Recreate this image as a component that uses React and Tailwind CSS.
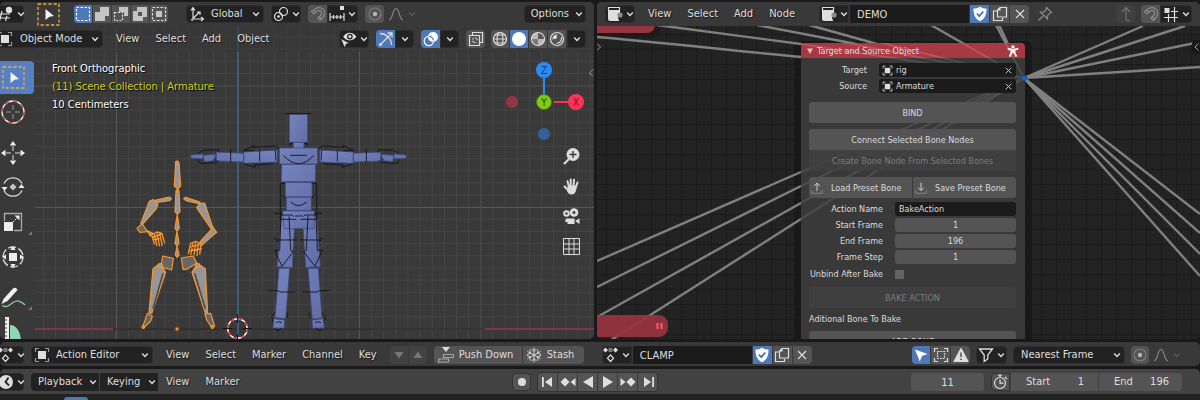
import React from "react";
import { twMerge as cx } from "tailwind-merge";

/* ---------- icons ---------- */

function Svg({ size = 16, children, className }) {
  return (
    <svg
      width={size}
      height={size}
      viewBox="0 0 16 16"
      fill="none"
      stroke="currentColor"
      strokeWidth="1.2"
      className={cx("shrink-0", className)}
      aria-hidden="true"
    >
      {children}
    </svg>
  );
}

const Chevron = ({ className }) => (
  <svg width="8" height="8" viewBox="0 0 8 8" fill="none" stroke="currentColor" strokeWidth="1.4" className={cx("shrink-0", className)} aria-hidden="true">
    <path d="M1.2 2.5 4 5.4 6.8 2.5" />
  </svg>
);

const icons = {
  editor3d: (
    <Svg>
      <path d="M0 8h5M0 12h12M4 5 1.5 15M9 10 7.5 15M3 8h9" />
      <circle cx="11" cy="4" r="3.2" fill="currentColor" stroke="none" />
    </Svg>
  ),
  node: (
    <Svg>
      <path d="M1.5 1.5h11v3h-11z" />
      <path d="M1 5h12v4a3 3 0 0 0-1 5v1H3a2 2 0 0 1-2-2z" fill="currentColor" stroke="none" />
      <circle cx="13" cy="9" r="2.6" fill="#8c8c8c" stroke="none" />
    </Svg>
  ),
  object: (
    <Svg>
      <rect x="4" y="4" width="8" height="8" fill="currentColor" stroke="none" />
      <path d="M1.5 5V1.5H5M11 1.5h3.5V5M14.5 11v3.5H11M5 14.5H1.5V11" stroke="#9a9a9a" />
    </Svg>
  ),
  action: (
    <Svg>
      <path d="m0 3 2.500-2.500L5 3 2.500 5.500zM10 3 12.500.5 15 3l-2.500 2.500z" fill="currentColor" stroke="none" />
      <path d="M5.500 1h4v4h-4z" fill="#777" stroke="none" />
      <path d="m7.500 8 3 3.200-3 3.300-3-3.300z" />
    </Svg>
  ),
  clock: (
    <Svg>
      <circle cx="8" cy="8" r="7" fill="currentColor" stroke="none" />
      <path d="M10.500 3.500 7.500 8l3.500 3.500" stroke="#222" strokeWidth="1.800" />
    </Svg>
  ),
  axes: (
    <Svg>
      <path d="M4 2.500V13h10M4 12.500 10 6.500M2 4.500l2-3 2 3M12 11l2.500 2-2.500 2M8 6h3v3M2 13.500l2 1" />
    </Svg>
  ),
  pivot: (
    <Svg>
      <circle cx="5.500" cy="10.500" r="4" />
      <circle cx="10.500" cy="5.500" r="4" />
      <circle cx="5.500" cy="10.500" r="1.300" fill="currentColor" stroke="none" />
    </Svg>
  ),
  magnet: (
    <Svg>
      <path d="M1.500 5.500 5.500 2.800C10 0 15.500 3 14.500 8c-.4 2.500-3 5.500-4.500 6.500L8 12c2-1.500 4-3.500 3.500-5.500S9 4 7.500 5L3.500 8zM4 4l1.600 2.600M11.500 13 9.500 10.500" />
    </Svg>
  ),
  snapInc: (
    <Svg>
      <path d="M1 7v8M15 7v8M1 11h14M4.500 9v4M8 9v4M11.500 9v4" />
      <rect x="11" y="0" width="4" height="4" fill="currentColor" stroke="none" />
    </Svg>
  ),
  snapGrid: (
    <Svg>
      <path d="M8 5.500h7M1 11.500h14M5.500 8v8M11.500 1v15" />
      <rect x="1.500" y="2" width="5" height="5" fill="currentColor" stroke="none" />
    </Svg>
  ),
  prop: (
    <Svg>
      <circle cx="8" cy="8" r="6" stroke="#7c7c7c" />
      <circle cx="8" cy="8" r="2.200" fill="#b5b5b5" stroke="none" />
    </Svg>
  ),
  falloff: (
    <Svg>
      <path d="M1 14C5 13.500 4.500 2.500 8 2.500S11 13.500 15 14" />
    </Svg>
  ),
  eye: (
    <Svg size={17}>
      <path d="M3 5.500C6 .5 12 .5 15.500 5.500 12 10 6 10 3 5.500z" fill="currentColor" stroke="none" />
      <circle cx="9.300" cy="5.200" r="2.100" fill="currentColor" stroke="#222" />
      <path d="M.5 7 9 11.500l-3.200.8L4.500 16z" fill="currentColor" stroke="#222" strokeWidth=".6" />
    </Svg>
  ),
  gizmo: (
    <Svg>
      <path d="M2 2.500c6 0 11.500 5 11.500 11.500M2 14 14 2M9.500 2H14v4.500" strokeWidth="1.300" />
      <circle cx="2.500" cy="13.500" r="1.500" fill="currentColor" stroke="none" />
    </Svg>
  ),
  overlay: (
    <Svg>
      <circle cx="10" cy="6" r="5" fill="#fff" stroke="none" />
      <circle cx="5.800" cy="10" r="4.600" stroke="#fff" />
      <path d="M10.300 9.500A4.600 4.600 0 0 0 5.800 5.400" stroke="#5680c2" />
    </Svg>
  ),
  xray: (
    <Svg>
      <path d="M4.500 4V1.500h10v10H12M1.500 4.500h10v10h-10z" />
      <path d="M5 7v4.500h4M7 7h2v3" strokeDasharray="1.500 1.200" />
    </Svg>
  ),
  wire: (
    <Svg>
      <circle cx="8" cy="8" r="6.500" />
      <ellipse cx="8" cy="8" rx="3" ry="6.500" />
      <path d="M1.500 8h13M3 4h10M3 12h10" strokeWidth=".9" />
    </Svg>
  ),
  solid: (
    <Svg>
      <circle cx="8" cy="8" r="7" fill="#fff" stroke="none" />
    </Svg>
  ),
  material: (
    <Svg>
      <circle cx="8" cy="8" r="6.500" fill="#b9b9b9" />
      <path d="M8 2a6 6 0 0 1 6 6H8z" fill="#5a5a5a" stroke="none" />
      <path d="M2 8h6v6a6 6 0 0 1-6-6z" fill="#7a7a7a" stroke="none" />
    </Svg>
  ),
  rendered: (
    <Svg>
      <circle cx="8" cy="8" r="6.500" />
      <path d="M4 8.500A4.200 4.200 0 0 1 8.500 4M12.500 6c.6 3-1 6-5 6.500" />
      <circle cx="6.200" cy="6.200" r="1.700" fill="currentColor" stroke="none" />
    </Svg>
  ),
  shield: (
    <Svg>
      <path d="M8 .8C5.800 2.200 4 2.600 1.500 2.600c0 6 1.500 10.500 6.500 12.600 5-2.100 6.500-6.600 6.500-12.600C12 2.600 10.200 2.200 8 .8z" fill="#fff" stroke="none" />
      <path d="m4.800 7.500 2.500 2.700L11.300 5.500" stroke="#4772b3" strokeWidth="1.800" />
    </Svg>
  ),
  copy: (
    <Svg>
      <path d="M8 1.500h6.500V11h-9V4zM8 1.500V4H5.500M5 5H1.500v9.500h9V12" />
    </Svg>
  ),
  close: (
    <Svg>
      <path d="m4 4 8 8M12 4l-8 8" />
    </Svg>
  ),
  pin: (
    <Svg>
      <path d="M9.500 1.500 14.500 6.500l-1.500.5-2.500 2.500V13L7 9.500 3.500 6H7L9.200 3.500zM6 10l-4.500 4.500" />
    </Svg>
  ),
  up: (
    <Svg>
      <path d="M8 14.500V2M4 6l4-4.500L12 6M8 14.500h4" />
    </Svg>
  ),
  pushDown: (
    <Svg>
      <path d="M4 0h8L8 5z" fill="currentColor" stroke="none" />
      <path d="M5.500 7.500h10v3h-10zM.6 12h10v3H.6z" stroke="#a5a5a5" />
    </Svg>
  ),
  snow: (
    <Svg>
      <path d="M8 .5v15M1.500 4.500l13 7M14.500 4.500l-13 7M5.500 2 8 4.500 10.500 2M5.500 14 8 11.500l2.500 2.500M1 7.500l3.500-1.200L4 2.500M15 7.500l-3.500-1.200.5-3.800M1 8.500l3.500 1.200L4 13.500M15 8.500l-3.500 1.200.5 3.800" strokeWidth=".9" />
    </Svg>
  ),
  arrow: (
    <Svg>
      <path d="M2 2.500 14.500 7 9 9l-2.200 5.500z" fill="#fff" stroke="none" />
    </Svg>
  ),
  onlySel: (
    <Svg>
      <path d="M1.500 5V1.500H5M11 1.500h3.500V5M14.500 11v3.500H11M5 14.500H1.500V11" />
      <path d="M4.500 4.500h7v7h-7z" strokeDasharray="1.800 1" />
    </Svg>
  ),
  warn: (
    <Svg>
      <path d="M8 1.500 15 14.500H1z" fill="currentColor" strokeLinejoin="round" />
      <path d="M8 5.500v4.500M8 11.500v1.500" stroke="#555" strokeWidth="1.600" />
    </Svg>
  ),
  funnel: (
    <Svg>
      <path d="M1.500 2h13L9.800 8v4L6.200 14.500V8z" strokeWidth="1.300" />
    </Svg>
  ),
  stopwatch: (
    <Svg>
      <circle cx="8" cy="9" r="5.500" />
      <path d="M6 1h4M8 1v2M8 5.500v3.700h3.500M13 3l2 2" />
    </Svg>
  ),
  load: (
    <Svg size={12}>
      <path d="M8 12V2M4 5.500 8 1.500l4 4" />
      <path d="M1 11v4h14v-4" stroke="#8b8b8b" />
    </Svg>
  ),
  save: (
    <Svg size={12}>
      <path d="M8 1v10M4 7.500l4 4 4-4" />
      <path d="M1 11v4h14v-4" stroke="#8b8b8b" />
    </Svg>
  ),
  figure: (
    <Svg size={12}>
      <circle cx="8" cy="2.500" r="2.300" fill="currentColor" stroke="none" />
      <path d="M1 5 6 6v4L3.500 15.500M15 5 10 6v4l2.500 5.500M8 6v5" strokeWidth="2.400" />
    </Svg>
  ),
};

const SelectMode = ({ kind }) => (
  <Svg>
    {kind === 0 && <rect x="1.500" y="1.500" width="13" height="13" stroke="#fff" strokeDasharray="2.500 1.500" />}
    {kind === 1 && <path d="M6 1h9v9h-4v5H1V6h5z" fill="#c4c4c4" stroke="none" />}
    {kind === 2 && (
      <>
        <path d="M6 1h9v9h-4V6H6z" fill="#c4c4c4" stroke="none" />
        <path d="M1.500 6.500h8v8h-8z" strokeDasharray="2 1.400" />
      </>
    )}
    {kind === 3 && <path d="M5 1h10v10h-4v4H1V5h4zM6 6v4h4V6z" fill="#c4c4c4" fillRule="evenodd" stroke="none" />}
    {kind === 4 && (
      <>
        <rect x="1.500" y="1.500" width="13" height="13" strokeDasharray="2.500 1.500" />
        <rect x="5" y="5" width="6" height="6" fill="#c4c4c4" stroke="none" />
      </>
    )}
  </Svg>
);

const TweakIcon = () => (
  <svg width="23" height="23" viewBox="0 0 23 23" fill="none" aria-hidden="true" className="shrink-0">
    <rect x="1" y="1" width="21" height="21" stroke="#f7a93b" strokeWidth="1.300" strokeDasharray="3.200 2" />
    <path d="M8.500 6 17 13l-4.500.8L8.500 17z" fill="#f2f2f2" />
  </svg>
);

/* ---------- controls ---------- */

const DARK = "bg-[#222222] border border-[#2f2f2f]";
const GREY = "bg-[#545454]";

const IconButton = ({ icon, label, active, className }) => (
  <button
    type="button"
    aria-label={label}
    className={cx("flex h-[18px] w-[19px] shrink-0 items-center justify-center", active ? "bg-[#4f78b8]" : GREY, className)}
  >
    {icon}
  </button>
);

const MenuIcon = ({ icon, label, className }) => (
  <button
    type="button"
    aria-label={label}
    className={cx("flex h-[18px] shrink-0 items-center justify-center gap-[3px] rounded-[4px]", DARK, className)}
  >
    {icon}
    <Chevron />
  </button>
);

const Menus = ({ items, className }) => (
  <nav className={cx("flex shrink-0 items-center", className)}>
    {items.map((t) => (
      <button key={t} type="button" className="h-[18px] px-2 text-shadow-[1px_1px_1px_#1a1a1a]">
        {t}
      </button>
    ))}
  </nav>
);

const Drop = ({ label, value, icon, className, pad }) => (
  <div className={cx("relative flex h-[18px] shrink-0 items-center", className)}>
    {icon && <span className="pointer-events-none absolute left-[3px]">{icon}</span>}
    <select aria-label={label} className={cx("h-full w-full appearance-none rounded-[4px] outline-none", DARK, pad)}>
      <option>{value}</option>
    </select>
    <Chevron className="pointer-events-none absolute right-1" />
  </div>
);

const DataBlock = ({ icon, name, label, className }) => (
  <div className={cx("flex shrink-0 items-center gap-px", className)}>
    <MenuIcon icon={icon} label={"Browse " + label} className="w-[30px] rounded-r-none" />
    <input aria-label={label} defaultValue={name} className="h-[18px] w-[119px] bg-[#1b1b1b] px-[7px] outline-none" />
    <IconButton icon={icons.shield} label="Fake user" active />
    <IconButton icon={icons.copy} label="New copy" />
    <IconButton icon={icons.close} label="Unlink" className="rounded-r-[4px]" />
  </div>
);

const Falloff = () => (
  <button type="button" aria-label="Falloff" className="ml-1 flex h-[18px] items-center gap-1 text-[#858585]">
    {icons.falloff}
    <Chevron className="text-[#5a5a5a]" />
  </button>
);

/* ---------- 3D viewport drawing ---------- */

function Armature() {
  const g = "#969696";
  const d = "#666";
  return (
    <g transform="translate(0 120) scale(.33333)" fill={g} stroke="#f7952b" strokeWidth="3.600" strokeLinejoin="round">
      <path d="M531 124l6 6 5 68-9 9-10-9 4-68z" />
      <path d="M533 207l4 6 3 62-8 8-7-8 3-62zM532 283l6 42-7 8-6-8zM531 333l6 37-6 8-6-8zM531 378l6 27-6 7-5-7z" />
      <path d="M514 237l-6-6-40 9-5 6 7 1 38-5zM551 236l5-4 44 14-2 5-40-9z" />
      <path d="M448 244l12-5 14 14-6 14-41 47-5-3z" />
      <path d="M590 263l10-13 14-1 24 73-5 4z" />
      <path d="M427 312l-16 13 9 12 22-2z" fill={d} />
      <path d="M441 332l18 8-8 8zM638 320l12 17-18 15-27 24-5-10 34-38z" />
      <path d="M488 408l32 7-5 35-32-10z" fill={d} />
      <path d="M544 414l36-6 10 22-30 18h-11z" fill={d} />
      <path d="M459 446l21-16 17 27-42 123-8-2zM576 457l16-27 24 16 7 134-6 2z" />
      <path d="M489 460l-30 106M584 460l32 106" stroke="#4d4d4d" strokeWidth="5" />
      <path d="M442 580l15 8-5 15-20 20-4-3zM615 582l17-2 12 38-8 5-16-23z" fill={d} />
      <circle cx="481" cy="437" r="6" />
      <circle cx="593" cy="436" r="6" />
      <circle cx="531" cy="128" r="5" />
      <circle cx="430" cy="621" r="4" />
      <circle cx="637" cy="621" r="4" />
      <circle cx="531" cy="627" r="6" fill="#f7952b" stroke="#7a4a15" />
      <path
        d="M455 345l16-9 15 4 8 30M455 346l9 28M463 342l8 36M471 340l8 39M479 340l8 38M456 352l30-10M458 360l33-8M603 372l-16-8-15 6-7 32M603 374l-4 30M595 370l-4 38M587 368l-5 38M579 370l-7 36M568 382l34-8M568 392l38-6"
        fill="none"
        strokeWidth="4"
      />
    </g>
  );
}

function ArmSide() {
  return (
    <>
      <path d="M239 150l101 6v34l-101-4zM340 160l82-4v27l-82 3zM422 163l40 3-4 19-26-3zM462 162l37 3-1 10-36 1z" fill="url(#skin)" stroke="#3c4679" strokeWidth="2" />
      <path d="M234 146l12-8 65 4-3-6 32 16-30 0M250 191l58 4-2 7 32-10M245 150l-2 32M292 150v34M379 148v38M414 158l2-9 45 2 14 8M416 182l10 6 44 2 8-12" />
      <path d="M193 130h8v8M215 250h15v108h-48M215 296l8-12M225 340h24M190 350l5-5h33l4 106 15 0-22 48-34-44 8-4 5-102M240 416h10M180 420h62l-4 6M186 576h44l8-4h28M212 655l-5-10 4-8M246 638l10 12-4 14M225 668q10-6 18 0M226 684l10 8 10-4" />
    </>
  );
}

function Rig() {
  return (
    <g transform="translate(240 100) scale(.33333)" fill="none" stroke="#101114" strokeWidth="2.600" strokeLinejoin="round">
      <g fill="url(#skin)" stroke="#3c4679" strokeWidth="2">
        <path d="M160 127h32v22h-32z" />
        <path d="M148 43h55v84h-55z" />
        <path d="M125 193h102l-1 52H124zM136 247h80v45h-80zM139 290h75v42h-75z" />
        <path d="M125 345l40 5-8 153-46-3zM230 345l-43 5 10 153 44-3z" />
        <path d="M117 505h32l-12 151-32-3zM204 505h31l11 150-29 2z" />
        <path d="M102 656l32 4-1 25-34-1zM250 656l-34 4 2 25 35-1z" />
        <path d="M128 333h95v53h-91z" />
        <path d="M118 144h115v48H118z" />
      </g>
      <path d="M135 41h80M130 166q46 50 92 0M150 166h50M152 306q24 22 48 0M165 348h22" />
      <ArmSide />
      <g transform="translate(351 0) scale(-1 1)">
        <ArmSide />
      </g>
    </g>
  );
}

const ViewportDrawing = () => (
  <svg className="absolute inset-0 h-full w-full" aria-hidden="true">
    <defs>
      <linearGradient id="skin" x1="0" y1="0" x2="1" y2="1">
        <stop offset="0" stopColor="#7684bd" />
        <stop offset="1" stopColor="#606da6" />
      </linearGradient>
      <pattern id="fine" width="12.150" height="12.150" patternUnits="userSpaceOnUse" x="6.450" y="12.300">
        <path d="M0 .5h12.150M.5 0v12.150" stroke="#444444" />
      </pattern>
    </defs>
    <g transform="translate(0 -2)">
      <rect width="100%" height="110%" fill="#393939" />
      <rect width="100%" height="110%" fill="url(#fine)" />
      <path d="M0 207.500h700M116.500 26v400M359.500 26v400" stroke="#565656" />
      <path d="M0 86h700M481 26v400" stroke="#4a4a4a" />
      <path d="M0 329h700" stroke="#262122" />
      <path d="M375 329.500h110" stroke="#56292c" />
      <path d="M0 329h113M485 329h220" stroke="#943c45" strokeWidth="1.600" />
      <path d="M238 26v400" stroke="#3f6293" strokeWidth="1.600" />
      <rect width="35" height="420" fill="#393939" />
      <Armature />
      <Rig />
      <circle cx="237.500" cy="328.500" r="9.800" fill="none" stroke="#fff" strokeWidth="1.500" />
      <circle cx="237.500" cy="328.500" r="9.800" fill="none" stroke="#e02020" strokeWidth="1.500" strokeDasharray="3.850 3.850" />
      <path d="M237.500 314v9M237.500 334v6M223 328.500h9M243 328.500h9" stroke="#15171b" />
    </g>
  </svg>
);

const tools = [
  {
    name: "Cursor",
    gap: "mt-[5px]",
    art: (
      <>
        <circle cx="13" cy="13" r="11" stroke="#eee" strokeWidth="1.300" />
        <circle cx="13" cy="13" r="11" stroke="#c0444c" strokeWidth="1.300" strokeDasharray="4.300 4.300" />
        <path d="M13 6v5M13 15v5M6 13h5M15 13h5" stroke="#9a9a9a" />
      </>
    ),
  },
  {
    name: "Move",
    gap: "mt-[15px]",
    art: (
      <>
        <path d="M13 6v5M13 15v5M6 13h5M15 13h5" stroke="#ddd" />
        <path d="m13 1 3.200 4.500H9.800zM13 25l3.200-4.500H9.800zM1 13l4.500-3.200v6.400zM25 13l-4.500-3.200v6.400z" fill="#eee" />
      </>
    ),
  },
  {
    name: "Rotate",
    gap: "mt-2",
    art: (
      <>
        <path d="M4 9.500a10 10 0 0 1 18 0M22 16.500a10 10 0 0 1-18 0" stroke="#ddd" strokeWidth="1.300" />
        <path d="M1.500 13h6L4.500 17zM18.500 14h6l-3-4z" fill="#eee" />
        <path d="m13 9.500 3.500 3.500-3.500 3.500L9.500 13z" fill="#c4c4c4" />
      </>
    ),
  },
  {
    name: "Scale",
    gap: "mt-[9px]",
    corner: true,
    art: (
      <>
        <path d="M4.500 12V4.500h17v17H14" stroke="#aaa" strokeWidth="1.300" />
        <path d="M4 13h9v9H4z" fill="#eee" />
        <path d="m13 13 4-4" stroke="#eee" strokeDasharray="2 1" />
        <path d="M19.500 6.500v5l-5-5z" fill="#eee" />
      </>
    ),
  },
  {
    name: "Transform",
    gap: "mt-[9px]",
    art: (
      <>
        <circle cx="13" cy="13" r="10" stroke="#ddd" strokeWidth="1.300" strokeDasharray="8 2.500" />
        <path d="M9 9h8v8H9z" fill="#eee" />
        <path d="m13 2 2.600 4h-5.200zM13 24l2.600-4h-5.200zM2 13l4-2.600v5.200zM24 13l-4-2.600v5.200z" fill="#eee" />
      </>
    ),
  },
  {
    name: "Annotate",
    gap: "mt-[14px]",
    corner: true,
    art: (
      <>
        <path d="M1.500 20 3.500 15 13 4.500q3-2 4.500 1.500L7.500 17z" fill="#eee" />
        <path d="M2 21.500c5 3 8-1 11-3s6-3 12 2.500" stroke="#7fc9a2" strokeWidth="1.400" />
      </>
    ),
  },
  {
    name: "Measure",
    gap: "mt-[6px]",
    art: (
      <>
        <path d="M10 26V9c7 0 11 8 11 17z" fill="#8fd6b1" />
        <path d="M5 1h4v25H5z" fill="#eee" />
        <path d="M5 4h2M5 8h2M5 12h2M5 16h2M5 20h2" stroke="#444" />
      </>
    ),
  },
];

const Toolbar = () => (
  <div className="mt-px flex w-[34px] flex-col items-start">
    <button type="button" aria-label="Select Box" className="flex h-[33px] w-full shrink-0 items-center rounded-r-[4px] bg-[#5680c2] pl-[2px]">
      <TweakIcon />
    </button>
    {tools.map((t) => (
      <button key={t.name} type="button" aria-label={t.name} className={cx("h-[26px] w-[34px] shrink-0", t.gap)}>
        <svg width="34" height="26" viewBox="0 0 34 26" fill="none" aria-hidden="true">
          {t.art}
          {t.corner && <path d="M32 22v4h-4z" fill="#777" />}
        </svg>
      </button>
    ))}
  </div>
);

const NavGizmo = () => (
  <svg width="82" height="82" viewBox="0 0 82 82" role="img" aria-label="View axes" className="font-['DejaVu_Sans_Condensed','DejaVu_Sans',sans-serif] text-[10px]">
    <path d="M40 14v22" stroke="#2b8bf5" strokeWidth="2" />
    <path d="M50 41h16" stroke="#ff3352" strokeWidth="2" />
    <circle cx="40" cy="9" r="8" fill="#2b8bf5" />
    <circle cx="72" cy="41" r="8" fill="#ff3352" />
    <circle cx="40" cy="41" r="7.500" fill="#80cc0c" stroke="#4f7a14" />
    <circle cx="8" cy="41" r="6" fill="#95353f" />
    <circle cx="40" cy="73" r="6" fill="#375f98" />
    <g textAnchor="middle">
      <text x="40" y="13" fill="#0d3a70">Z</text>
      <text x="40" y="45" fill="#1f3a05">Y</text>
      <text x="72" y="45" fill="#7a1425">X</text>
    </g>
  </svg>
);

const navButtons = [
  [
    "Zoom",
    <g key="z">
      <circle cx="10" cy="6.500" r="6.500" fill="#dcdcdc" />
      <path d="m6 11-5 5" stroke="#dcdcdc" strokeWidth="2.200" />
      <path d="M6.500 6.500h7M10 3v7" stroke="#333" strokeWidth="1.300" />
    </g>,
  ],
  [
    "Pan",
    <g key="p">
      <path d="M4.500 3.200 6 9M7.700 1.500V8M11 1.700 10.500 8M14.500 4.500 12.500 10M1.500 8.500l4 4" stroke="#dcdcdc" strokeWidth="2" strokeLinecap="round" />
      <path d="M4.800 7.500h9L13 13q-1.500 3.500-4.500 3.500T4 13z" fill="#dcdcdc" />
    </g>,
  ],
  [
    "Camera",
    <g key="c" fill="#dcdcdc">
      <circle cx="3.500" cy="5.500" r="3.300" />
      <circle cx="11" cy="4.500" r="4.300" />
      <path d="M3 10.500h8.500v5.500H4.500v-2H2zM12 13l4.500-2.500V16z" />
      <circle cx="3.500" cy="5.500" r="1.200" fill="#444" />
      <circle cx="11" cy="4.500" r="1.500" fill="#444" />
    </g>,
  ],
  ["Orthographic grid", <path key="o" d="M.5 .5h16v16h-16zM6 1v15M11 1v15M1 6h15M1 11h15" stroke="#dcdcdc" />],
];

const ViewportEditor = () => (
  <section className="relative flex w-[49.5%] shrink-0 flex-col overflow-hidden rounded-[5px] bg-[#393939]">
    <ViewportDrawing />
    <header className="relative flex h-6 shrink-0 items-center bg-[#393939]">
      <MenuIcon icon={icons.editor3d} label="Editor type" className="w-6 rounded-l-none border-l-0" />
      <button type="button" aria-label="Tweak tool" className="ml-[13px]">
        <TweakIcon />
      </button>
      <div className="ml-[14px] flex gap-px overflow-hidden rounded-[4px]">
        {[0, 1, 2, 3, 4].map((k) => (
          <IconButton key={k} icon={<SelectMode kind={k} />} label={"Select mode " + (k + 1)} active={k === 0} className="w-[18px]" />
        ))}
      </div>
      <Drop label="Transform orientation" value="Global" icon={icons.axes} className="ml-[18px] w-[78px]" pad="pl-6" />
      <MenuIcon icon={icons.pivot} label="Pivot point" className="ml-[7px] w-[30px]" />
      <IconButton icon={<span className="text-[#8c8c8c]">{icons.magnet}</span>} label="Snap" className="ml-[7px] rounded-l-[4px]" />
      <MenuIcon icon={icons.snapInc} label="Snap to" className="w-[31px] rounded-l-none" />
      <IconButton icon={icons.prop} label="Proportional editing" className="ml-[7px] rounded-[4px]" />
      <Falloff />
      <button type="button" className={cx("mr-2 ml-auto flex h-[18px] items-center gap-[6px] rounded-[4px] pr-[2px] pl-[6px]", DARK)}>
        Options
        <Chevron />
      </button>
    </header>
    <div className="relative flex h-[26px] shrink-0 items-center bg-[#393939]/60">
      <Drop label="Mode" value="Object Mode" icon={<span className="-ml-[6px] block">{icons.object}</span>} className="w-[103px]" pad="pl-[19px] rounded-l-none" />
      <Menus items={["View", "Select", "Add", "Object"]} className="ml-[5px]" />
      <MenuIcon icon={icons.eye} label="Object visibility" className="ml-auto w-[30px]" />
      <IconButton icon={icons.gizmo} label="Gizmos" active className="ml-[7px] rounded-l-[4px]" />
      <MenuIcon label="Gizmo options" className="w-[19px] rounded-l-none" />
      <IconButton icon={icons.overlay} label="Overlays" active className="ml-[7px] rounded-l-[4px]" />
      <MenuIcon label="Overlay options" className="w-[19px] rounded-l-none" />
      <IconButton icon={icons.xray} label="Toggle X-ray" className="ml-[7px] rounded-[4px]" />
      <div className="mr-2 ml-[6px] flex gap-px">
        <IconButton icon={icons.wire} label="Wireframe" className="w-[18px] rounded-l-[4px]" />
        <IconButton icon={icons.solid} label="Solid" active className="w-[18px]" />
        <IconButton icon={icons.material} label="Material preview" className="w-[18px]" />
        <IconButton icon={icons.rendered} label="Rendered" className="w-[18px]" />
        <MenuIcon label="Shading options" className="w-[19px] rounded-l-none" />
      </div>
    </div>
    <div className="relative flex min-h-0 flex-1 pt-2">
      <Toolbar />
      <div className="ml-[18px] text-[11px] leading-[18px] text-white text-shadow-[1px_1px_1px_#000]">
        <p>Front Orthographic</p>
        <p className="text-[#cfcf1c]">(11) Scene Collection | Armature</p>
        <p>10 Centimeters</p>
      </div>
      <div className="mt-px mr-2 ml-auto flex flex-col items-end">
        <NavGizmo />
        <div className="mt-[5px] mr-[6px] flex flex-col gap-[13px]">
          {navButtons.map(([name, art]) => (
            <button key={name} type="button" aria-label={name}>
              <svg width="17" height="17" viewBox="0 0 17 17" fill="none" aria-hidden="true" className="block">
                {art}
              </svg>
            </button>
          ))}
        </div>
      </div>
    </div>
    <button type="button" aria-label="Show sidebar" className="absolute top-[66px] right-0 text-[#a0a0a0]">
      <svg width="6" height="10" viewBox="0 0 6 10" fill="none" stroke="currentColor" aria-hidden="true">
        <path d="M5 1.500 1.500 5 5 8.500" />
      </svg>
    </button>
  </section>
);

/* ---------- node editor ---------- */

const wires = [
  "M0 37 C60 42 130 50 204 57",
  "M60 25 L204 44",
  "M160 25 L296 51",
  "M212 25 L330 58",
  "M334 25 L402 64",
  "M399 25 L427 78",
  "M402 25 L427 78",
  "M427 78 L546 26",
  "M427 78 L588 26",
  "M427 78 L603 42",
  "M427 78 L603 67",
  "M427 78 L603 214",
  "M427 78 L603 233",
  "M427 78 L603 254",
  "M427 78 L603 276",
  "M0 261 L204 172",
  "M0 287 L204 186",
  "M0 317 L204 203",
  "M14 340 L204 219",
];

const ghostWires = [
  "M204 44 L427 78",
  "M160 25 L427 78",
  "M212 25 L427 78",
  "M334 25 L402 64",
  "M399 25 L427 78",
  "M204 172 L427 78",
  "M204 186 L427 78",
  "M204 203 L427 78",
  "M204 219 L427 78",
];

const NodeCanvas = () => (
  <svg className="absolute inset-0 h-full w-full" aria-hidden="true">
    <defs>
      <pattern id="cells" width="15" height="15" patternUnits="userSpaceOnUse" x="9" y="4">
        <path d="M0 .5h15M.5 0v15" stroke="#1b1b1b" />
      </pattern>
    </defs>
    <g transform="translate(0 -2)">
      <rect width="100%" height="110%" fill="#232323" />
      <rect width="100%" height="110%" fill="url(#cells)" />
      <rect x="-20" y="0" width="83" height="38" rx="9" fill="#1a1a1a" opacity=".7" />
      <rect x="-20" y="0" width="78" height="33" rx="8" fill="#98343f" />
      <rect x="197" y="41" width="238" height="310" rx="6" fill="#171717" opacity=".8" />
      <g stroke="#808080" strokeWidth="2.400" fill="none">
        {wires.map((d) => (
          <path key={d} d={d} />
        ))}
      </g>
      <rect x="-20" y="315" width="91" height="22" rx="9" fill="#98343f" opacity=".93" />
      <path d="M60.500 323v6M64.500 323v6" stroke="#ff5f6c" strokeWidth="2" />
    </g>
  </svg>
);

const Ghosts = ({ top, tone }) => (
  <svg className="absolute inset-0 h-full w-full overflow-hidden" aria-hidden="true">
    <g transform={`translate(-204 ${-top})`} stroke={tone} strokeWidth="2" fill="none">
      {ghostWires.map((d) => (
        <path key={d} d={d} />
      ))}
    </g>
  </svg>
);

const PanelButton = ({ children, className, disabled }) => (
  <button
    type="button"
    disabled={disabled}
    className={cx(
      "flex h-[21px] items-center justify-center whitespace-nowrap",
      disabled ? "bg-[#414141]/80 text-[#7c7c7c]" : "bg-[#545454]",
      className
    )}
  >
    {children}
  </button>
);

const PointerRow = ({ id, label, value }) => (
  <div className="flex h-4 items-center">
    <label htmlFor={id} className="w-[58px] text-right">
      {label}
    </label>
    <div className="ml-3 flex h-[14px] min-w-0 flex-1 items-center rounded-[3px] bg-[#1b1b1b] px-[3px]">
      <Svg size={11}>
        <rect x="4" y="4" width="8" height="8" fill="currentColor" stroke="none" />
        <path d="M1.500 5V1.500H5M11 1.500h3.500V5M14.500 11v3.500H11M5 14.500H1.500V11" />
      </Svg>
      <input id={id} defaultValue={value} className="ml-[3px] h-full min-w-0 flex-1 bg-transparent outline-none" />
      <button type="button" aria-label={"Clear " + label}>
        <Svg size={9}>
          <path d="m3 3 10 10M13 3 3 13" strokeWidth="1.600" />
        </Svg>
      </button>
    </div>
  </div>
);

const FieldRow = ({ id, label, value, text }) => (
  <div className="flex h-4 items-center">
    <label htmlFor={id} className="w-[74px] text-right whitespace-nowrap">
      {label}
    </label>
    <input
      id={id}
      defaultValue={value}
      className={cx("ml-3 h-[14px] min-w-0 flex-1 rounded-[3px] outline-none", text ? "bg-[#1b1b1b] px-1" : "bg-[#545454] text-center")}
    />
  </div>
);

const BoneNode = () => (
  <article className="absolute top-[41px] left-[204px] w-[224px] text-[9px] leading-[12px] text-[#dcdcdc]">
    <header className="relative flex h-[15px] items-center rounded-t-[4px] bg-[#a83843] px-[6px]">
      <Ghosts top={43} tone="#b8535d" />
      <svg width="6" height="6" viewBox="0 0 6 6" className="relative" aria-hidden="true">
        <path d="M0 .5h6L3 6z" fill="#e3b9bc" />
      </svg>
      <h2 className="relative ml-1">Target and Source Object</h2>
      <span className="relative ml-auto text-white">{icons.figure}</span>
    </header>
    <div className="relative flex flex-col bg-[#393939] pt-1 pr-[9px] pb-3 pl-2">
      <Ghosts top={58} tone="#4d4d4d" />
      <div className="relative flex flex-col">
        <PointerRow id="target" label="Target" value="rig" />
        <PointerRow id="source" label="Source" value="Armature" />
        <PanelButton className="mt-2 rounded-[3px]">BIND</PanelButton>
        <PanelButton className="mt-[6px] rounded-t-[3px]">Connect Selected Bone Nodes</PanelButton>
        <PanelButton disabled className="rounded-b-[3px]">
          Create Bone Node From Selected Bones
        </PanelButton>
        <div className="mt-[6px] grid grid-cols-2 gap-px">
          <PanelButton className="justify-start gap-2 rounded-l-[3px] pl-[2px]">
            {icons.load}Load Preset Bone
          </PanelButton>
          <PanelButton className="justify-start gap-2 rounded-r-[3px] pl-[2px]">
            {icons.save}Save Preset Bone
          </PanelButton>
        </div>
        <div className="mt-[3px] flex flex-col">
          <FieldRow id="action-name" label="Action Name" value="BakeAction" text />
          <FieldRow id="start-frame" label="Start Frame" value="1" />
          <FieldRow id="end-frame" label="End Frame" value="196" />
          <FieldRow id="frame-step" label="Frame Step" value="1" />
        </div>
        <div className="flex h-[18px] items-center">
          <label htmlFor="unbind" className="w-[74px] text-right whitespace-nowrap">
            Unbind After Bake
          </label>
          <input id="unbind" type="checkbox" className="ml-3 h-[9px] w-[9px] appearance-none rounded-[1px] bg-[#636363]" />
        </div>
        <PanelButton disabled className="mt-1 rounded-[3px]">
          BAKE ACTION
        </PanelButton>
        <p className="mt-[5px]">Aditional Bone To Bake</p>
        <PanelButton className="mt-[6px] rounded-[3px]">ADD BONE</PanelButton>
      </div>
    </div>
    <svg width="8" height="8" viewBox="0 0 8 8" className="absolute top-[31px] -right-[3px]" aria-hidden="true">
      <path d="m4 .5 3.500 3.500L4 7.500.5 4z" fill="#1c63cf" stroke="#12305f" strokeWidth=".8" />
    </svg>
  </article>
);

const NodeEditor = () => (
  <section className="relative flex min-w-0 flex-1 flex-col overflow-hidden rounded-[5px] bg-[#232323]">
    <NodeCanvas />
    <BoneNode />
    <header className="relative flex h-6 shrink-0 items-center bg-[#393939]">
      <MenuIcon icon={icons.node} label="Editor type" className="ml-2 w-[30px]" />
      <Menus items={["View", "Select", "Add", "Node"]} className="ml-[5px]" />
      <DataBlock icon={icons.node} name="DEMO" label="Node tree" className="ml-4" />
      <button type="button" aria-label="Pin" className="ml-2 text-[#8c8c8c]">
        {icons.pin}
      </button>
      <IconButton icon={<span className="text-[#707070]">{icons.up}</span>} label="Parent tree" className="mr-[6px] ml-auto rounded-[4px] bg-[#404040]" />
      <IconButton icon={<span className="text-[#8c8c8c]">{icons.magnet}</span>} label="Snap" className="rounded-l-[4px]" />
      <MenuIcon icon={icons.snapGrid} label="Snap to" className="mr-2 w-8 rounded-l-none" />
    </header>
    <button type="button" aria-label="Show toolbar" className="absolute top-[39px] left-0 text-[#a0a0a0]">
      <svg width="6" height="12" viewBox="0 0 6 12" fill="none" stroke="currentColor" aria-hidden="true">
        <path d="M0 2.500 3.500 6 0 9.500" />
      </svg>
    </button>
    <button type="button" aria-label="Show node sidebar" className="absolute top-[38px] right-0 rounded-l-[4px] bg-[#191919] text-[#a0a0a0]">
      <svg width="8" height="14" viewBox="0 0 8 14" fill="none" stroke="currentColor" aria-hidden="true">
        <path d="M6.500 3.500 3 7l3.500 3.500" />
      </svg>
    </button>
  </section>
);

/* ---------- bottom bars ---------- */

const ActionBar = () => (
  <section className="flex h-6 shrink-0 items-center rounded-[5px] bg-[#393939] pt-[2px]">
    <MenuIcon icon={icons.action} label="Editor type" className="w-6 rounded-l-none border-l-0" />
    <Drop label="Editing context" value="Action Editor" icon={icons.object} className="ml-[7px] w-[122px]" pad="pl-6" />
    <Menus items={["View", "Select", "Marker", "Channel", "Key"]} className="ml-[5px]" />
    <div className="ml-[5px] flex gap-px text-[#777]">
      {["M3.500 5h9L8 11.500z", "M3.500 11h9L8 4.500z"].map((d, i) => (
        <IconButton
          key={d}
          label={i ? "Layer up" : "Layer down"}
          className={cx("w-[18px] bg-[#424242]", i ? "rounded-r-[4px]" : "rounded-l-[4px]")}
          icon={
            <Svg>
              <path d={d} fill="currentColor" stroke="none" />
            </Svg>
          }
        />
      ))}
    </div>
    <div className="ml-[7px] flex gap-px">
      <button type="button" className={cx("flex h-[18px] w-[88px] items-center gap-[5px] rounded-l-[4px] pl-1 whitespace-nowrap", GREY)}>
        {icons.pushDown}Push Down
      </button>
      <button type="button" className={cx("flex h-[18px] w-[61px] items-center gap-[5px] rounded-r-[4px] pl-[3px]", GREY)}>
        {icons.snow}Stash
      </button>
    </div>
    <DataBlock icon={icons.action} name="CLAMP" label="Action" className="ml-[18px]" />
    <div className="ml-auto flex gap-px">
      <IconButton icon={icons.arrow} label="Only show selected" active className="w-[18px] rounded-l-[4px]" />
      <IconButton icon={icons.onlySel} label="Show hidden" />
      <IconButton icon={icons.warn} label="Only show errors" className="rounded-r-[4px]" />
    </div>
    <MenuIcon icon={icons.funnel} label="Filters" className="ml-[6px] w-[31px]" />
    <Drop label="Auto snap" value="Nearest Frame" className="ml-[6px] w-[112px]" pad="pl-[7px]" />
    <IconButton icon={icons.prop} label="Proportional editing" className="ml-[6px] w-[18px] rounded-[4px]" />
    <div className="mr-[19px] flex">
      <Falloff />
    </div>
  </section>
);

const transport = [
  ["Jump to start", "M2 3h1.800v10H2zM12 3v10L5 8z"],
  ["Previous keyframe", "M5 3.500 9.500 8 5 12.500.5 8zM15.500 4v8L10.500 8z"],
  ["Play reverse", "M13 2v12L3 8z"],
  ["Play", "M3 2v12l10-6z"],
  ["Next keyframe", "M11 3.500 15.500 8 11 12.500 6.500 8zM.5 4v8l5-4z"],
  ["Jump to end", "M12.200 3H14v10h-1.800zM4 3v10l7-5z"],
];

const TimelineBar = () => (
  <section className="flex h-[25px] shrink-0 items-center rounded-t-[5px] bg-[#424242] pt-px">
    <div className="flex items-center pr-3">
      <MenuIcon icon={icons.clock} label="Editor type" className="w-6 rounded-l-none border-l-0" />
      <div className="ml-[7px] flex gap-px">
        <button type="button" className="flex h-[18px] w-[68px] items-center justify-between rounded-l-[4px] bg-[#222222] pr-[2px] pl-[7px]">
          Playback
          <Chevron />
        </button>
        <button type="button" className="flex h-[18px] w-[58px] items-center justify-between bg-[#222222] pr-[2px] pl-[7px]">
          Keying
          <Chevron />
        </button>
      </div>
      <Menus items={["View", "Marker"]} />
    </div>
    <div className="mx-auto flex items-center">
      <button type="button" aria-label="Auto keying" className={cx("flex h-[18px] w-[19px] items-center justify-center rounded-[4px] border border-[#333]", GREY)}>
        <span className="h-2 w-2 rounded-full bg-[#dcdcdc]" />
      </button>
      <div className="ml-[6px] flex gap-px overflow-hidden rounded-[4px] border border-[#333] bg-[#3a3a3a]">
        {transport.map(([name, d]) => (
          <IconButton
            key={name}
            label={name}
            icon={
              <Svg>
                <path d={d} fill="currentColor" stroke="none" />
              </Svg>
            }
          />
        ))}
      </div>
    </div>
    <input aria-label="Current frame" defaultValue="11" className={cx("h-[18px] w-[73px] rounded-[3px] text-center outline-none", GREY)} />
    <div className="mr-[18px] ml-[7px] flex gap-px">
      <IconButton icon={icons.stopwatch} label="Use preview range" className="rounded-l-[4px] border border-[#333]" />
      <label className={cx("flex h-[18px] w-[87px] items-center justify-between pr-[14px] pl-[15px]", GREY)}>
        Start
        <input defaultValue="1" className="w-8 bg-transparent text-right outline-none" />
      </label>
      <label className={cx("flex h-[18px] w-[83px] items-center justify-between rounded-r-[4px] pr-[13px] pl-[15px]", GREY)}>
        End
        <input defaultValue="196" className="w-8 bg-transparent text-right outline-none" />
      </label>
    </div>
  </section>
);

export default function App() {
  return (
    <main className="flex h-screen w-full flex-col overflow-hidden bg-[#191919] pt-[2px] font-['DejaVu_Sans_Condensed','DejaVu_Sans',sans-serif] text-[11px] leading-[14px] text-[#dedede]">
      <div className="flex min-h-0 flex-1 gap-[3px]">
        <ViewportEditor />
        <NodeEditor />
      </div>
      <div className="mt-[3px] flex shrink-0 flex-col gap-[3px]">
        <ActionBar />
        <div>
          <TimelineBar />
          <div className="flex h-[6px] items-end bg-[#222222]">
            <div className="ml-16 h-[3px] w-6 rounded-t-[3px] bg-[#4f78b8]" />
          </div>
        </div>
      </div>
    </main>
  );
}
